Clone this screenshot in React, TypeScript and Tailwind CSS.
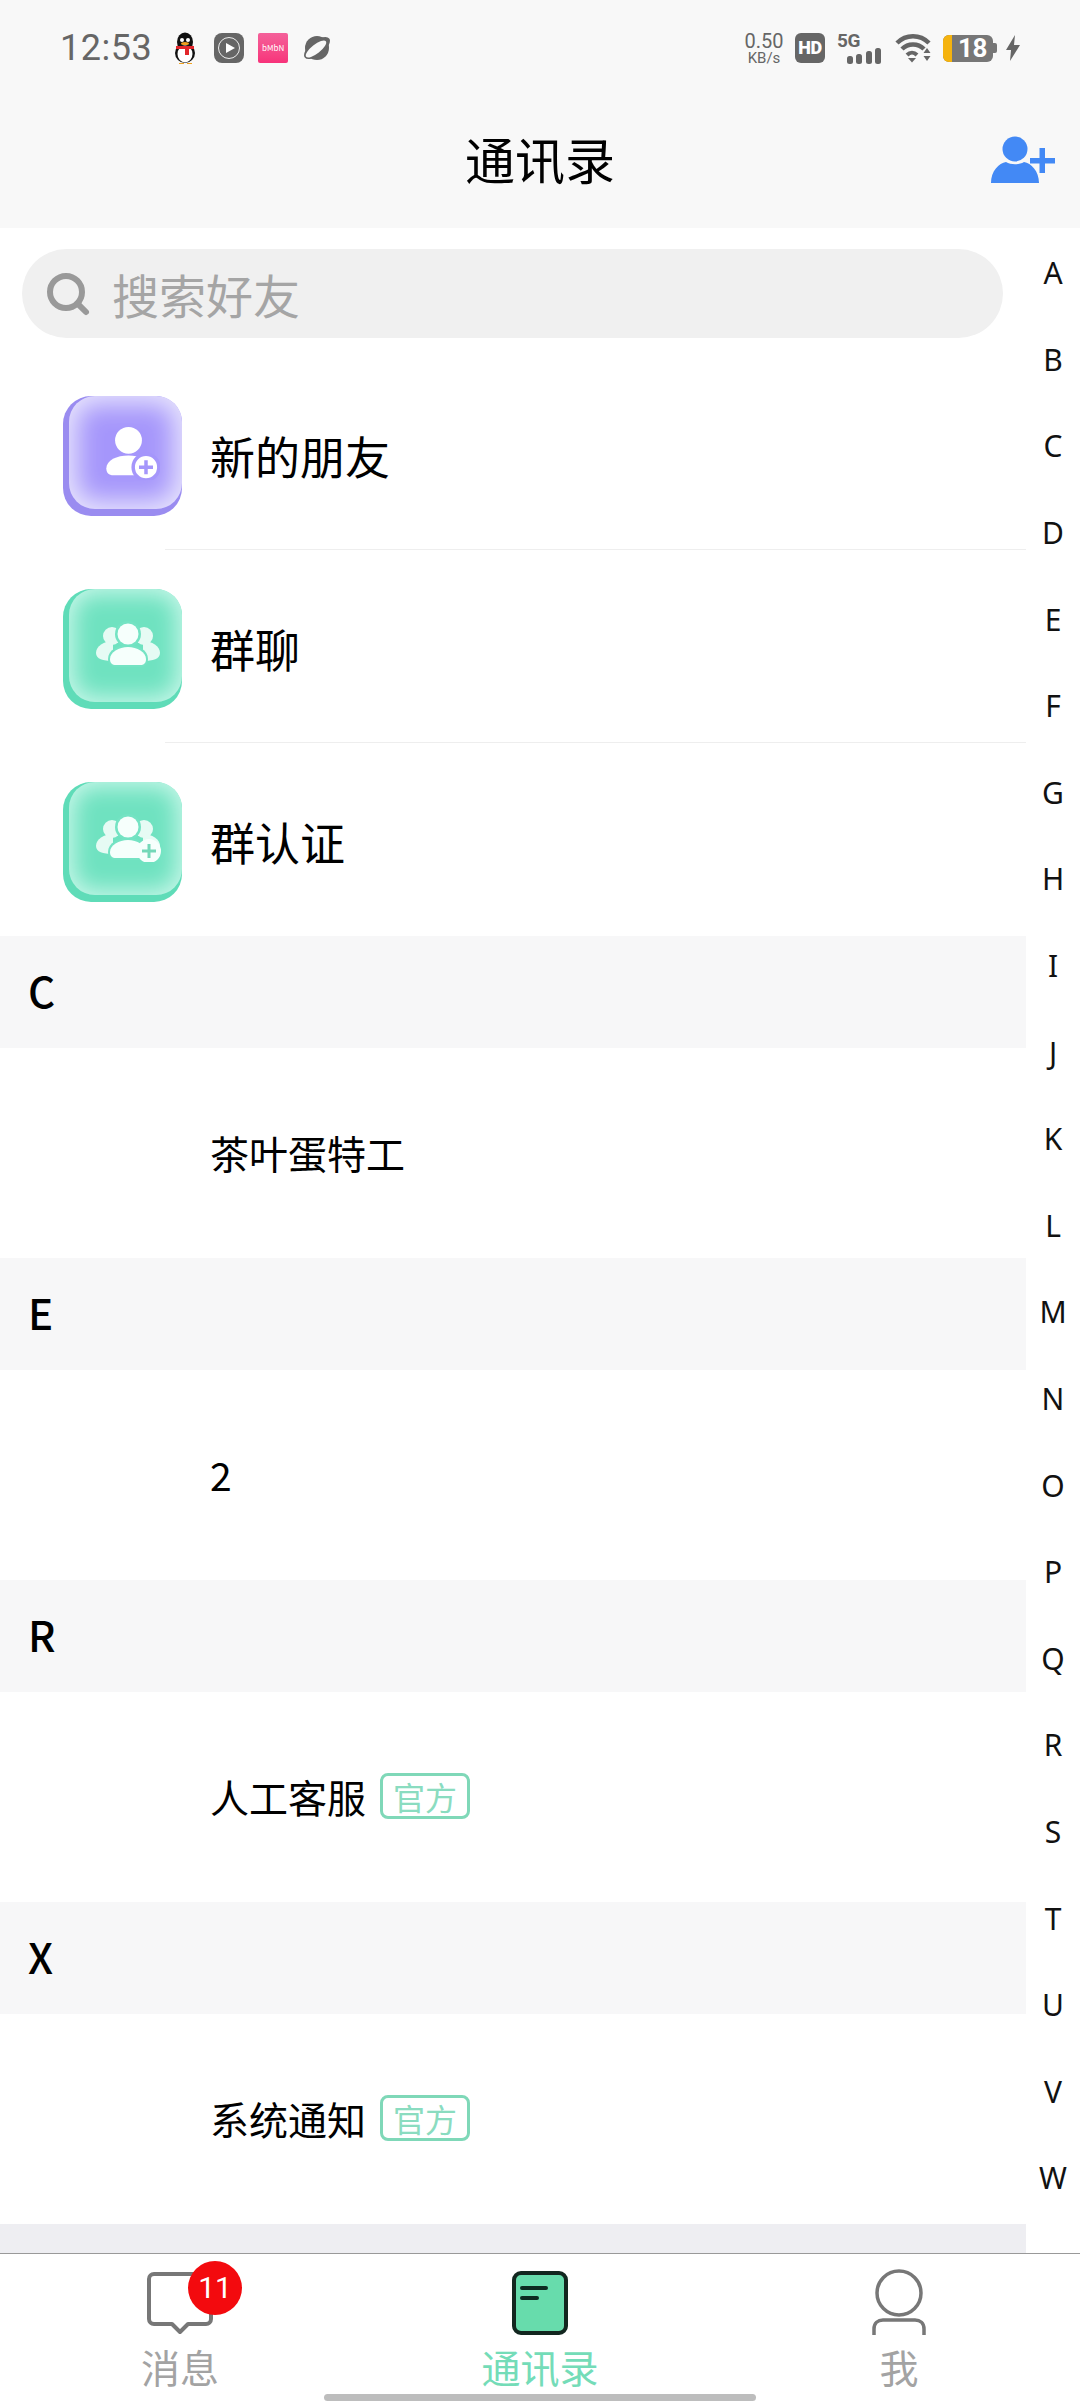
import { Search } from 'lucide-react';

const LETTERS = 'ABCDEFGHIJKLMNOPQRSTUVW'.split('');
const FONT = "font-['Noto_Sans_CJK_SC','Noto_Sans',sans-serif]";

const sections = [
	{ letter: 'C', name: '茶叶蛋特工', official: false },
	{ letter: 'E', name: '2', official: false },
	{ letter: 'R', name: '人工客服', official: true },
	{ letter: 'X', name: '系统通知', official: true },
];

function UserPlusGlyph({ color }: { color: string }) {
	return (
		<svg viewBox="6 0 48 48" className="ml-[12px] h-[56px] w-[56px]">
			<circle cx="27" cy="14" r="11.5" fill="#fff" />
			<path d="M8 38c0-7 9-11 19-11s15 3 15 11c0 4-2 6-6 6H14c-4 0-6-2-6-6z" fill="#fff" />
			<circle cx="42" cy="37" r="11" fill="#fff" stroke={color} strokeWidth="3" />
			<path d="M42 31v12M36 37h12" stroke={color} strokeWidth="3" />
		</svg>
	);
}

function GroupGlyph({ plus }: { plus?: boolean }) {
	return (
		<svg viewBox="1 0 68 48" className="ml-[8px] h-[48px] w-[68px]">
			<circle cx="17" cy="15" r="9" fill="#e6fbf4" />
			<circle cx="49" cy="15" r="9" fill="#e6fbf4" />
			<path d="M1 32c0-7 8-12 17-12v20C8 40 1 38 1 32z" fill="#e6fbf4" />
			<path d="M65 32c0-7-8-12-17-12v20c10 0 17-2 17-8z" fill="#e6fbf4" />
			<circle cx="33" cy="13" r="13" fill="#74e3c3" />
			<circle cx="33" cy="13" r="10.5" fill="#f6fffc" />
			<path d="M13 38c0-9 10-14 20-14s20 5 20 14c0 5-3 8-8 8H21c-5 0-8-3-8-8z" fill="#74e3c3" />
			<path d="M15 38c0-7 9-12 18-12s18 5 18 12c0 4-2 6-6 6H21c-4 0-6-2-6-6z" fill="#f6fffc" />
			{plus && (
				<>
					<circle cx="54" cy="37" r="12" fill="#f6fffc" />
					<path d="M54 30v14M47 37h14" stroke="#74d8b8" strokeWidth="3" />
				</>
			)}
		</svg>
	);
}

function Tile({ kind }: { kind: 'friend' | 'group' | 'verify' }) {
	const purple = kind === 'friend';
	return (
		<div
			className={`flex h-[120px] w-[119px] shrink-0 rounded-[28px] ${purple ? 'bg-[#9a8cf0]' : 'bg-[#5fdcb8]'}`}
		>
			<div
				className={`mb-[7px] ml-[6px] flex flex-1 items-center justify-center rounded-[26px] ${
					purple
						? 'bg-[#a596fb] shadow-[inset_0_0_26px_8px_#e9e6fd]'
						: 'bg-[#6fe2c0] shadow-[inset_0_0_22px_5px_#c8f7e9]'
				}`}
			>
				{purple ? <UserPlusGlyph color="#a596fb" /> : <GroupGlyph plus={kind === 'verify'} />}
			</div>
		</div>
	);
}

function StatusBar() {
	return (
		<div className="flex h-[96px] items-center pl-[60px] pr-[60px]">
			<span className="font-['Roboto',sans-serif] text-[36px] leading-none tracking-[0.5px] text-[#666]">
				12:53
			</span>
			<div className="ml-[18px] flex items-center gap-[14px]">
				{/* qq */}
				<svg viewBox="0 0 30 32" className="h-[32px] w-[30px]">
					<ellipse cx="15" cy="10" rx="8" ry="9.5" fill="#111" />
					<ellipse cx="15" cy="21" rx="10" ry="10" fill="#111" />
					<ellipse cx="15" cy="22" rx="7.5" ry="8.5" fill="#fff" />
					<circle cx="12" cy="8" r="2" fill="#fff" />
					<circle cx="18" cy="8" r="2" fill="#fff" />
					<ellipse cx="15" cy="11.5" rx="4" ry="1.6" fill="#f0a11f" />
					<path d="M6 14h18v3h-5v6h-4v-6H6z" fill="#e2262b" />
					<path d="M9 31h5v1H9zM17 31h5v1h-5z" fill="#f0a11f" />
				</svg>
				{/* player */}
				<div className="flex h-[30px] w-[30px] items-center justify-center rounded-[8px] bg-[#666]">
					<svg viewBox="0 0 24 24" className="h-[24px] w-[24px]">
						<circle cx="12" cy="12" r="10.5" fill="none" stroke="#eee" strokeWidth="1" />
						<path d="M9 7l9 5-9 5z" fill="#fff" />
					</svg>
				</div>
				{/* pink app */}
				<div className="flex h-[30px] w-[30px] items-center justify-center rounded-[2px] bg-gradient-to-b from-[#f4609a] to-[#f7327a] text-[8px] leading-none text-white">
					bMbN
				</div>
				{/* planet */}
				<svg viewBox="0 0 30 28" className="h-[28px] w-[30px]">
					<circle cx="15" cy="14" r="12" fill="#666" />
					<ellipse cx="15" cy="14" rx="15.500" ry="7" transform="rotate(-38 15 14)" fill="#666" />
					<ellipse cx="14" cy="15" rx="12.500" ry="4.500" transform="rotate(-38 14 15)" fill="#f8f8f8" />
				</svg>
			</div>

			<div className="ml-auto flex items-center">
				<div className="flex w-[38px] flex-col items-center text-[#666]">
					<span className="font-['Roboto',sans-serif] text-[20px] leading-[20px]">0.50</span>
					<span className="font-['Roboto',sans-serif] text-[15px] leading-[15px]">KB/s</span>
				</div>
				<div className="ml-[12px] flex h-[30px] w-[30px] items-center justify-center rounded-[6px] bg-[#666] font-['Roboto',sans-serif] text-[18px] font-black leading-none tracking-[-0.5px] text-white">
					HD
				</div>
				{/* 5G + bars */}
				<div className="relative ml-[12px] h-[32px] w-[44px]">
					<span className="absolute left-0 top-[-1px] font-['Roboto',sans-serif] text-[19px] font-bold leading-none tracking-[-0.5px] text-[#666]">
						5G
					</span>
					<svg viewBox="0 0 34 16" className="absolute bottom-0 right-0 h-[16px] w-[34px]">
						<rect x="0" y="8" width="6" height="8" rx="2.500" fill="#666" />
						<rect x="9" y="6" width="6" height="10" rx="2.500" fill="#666" />
						<rect x="19" y="3" width="6" height="13" rx="2.500" fill="#666" />
						<rect x="28" y="0" width="6" height="16" rx="2.500" fill="#666" />
					</svg>
				</div>
				{/* wifi */}
				<svg viewBox="0 0 36 30" className="ml-[14px] h-[30px] w-[36px]">
					<path d="M2 10C11 1 25 1 34 10" fill="none" stroke="#666" strokeWidth="4.500" />
					<path d="M7 16C13 10 23 10 29 16" fill="none" stroke="#666" strokeWidth="4.500" />
					<path d="M12 22C15 19 19 19 22 22" fill="none" stroke="#666" strokeWidth="4" />
					<path d="M13 25h8l-4 4.500z" fill="#666" />
					<path d="M32 15l3.500 5h-7zM28.500 23h7L32 28z" fill="#666" />
				</svg>
				{/* battery */}
				<div className="ml-[12px] flex items-center">
					<div className="flex h-[27px] w-[50px] items-center rounded-[6px] bg-[#777]">
						<div className="h-full w-[9px] rounded-l-[6px] bg-[#f5b30e]" />
						<span className="flex-1 text-center font-['Roboto',sans-serif] text-[26px] font-bold leading-none tracking-[-0.5px] text-white">
							18
						</span>
					</div>
					<div className="h-[10px] w-[4px] rounded-r-[2px] bg-[#777]" />
				</div>
				{/* charging */}
				<svg viewBox="0 0 14 26" className="ml-[9px] h-[26px] w-[14px]">
					<path d="M9 0L0 15h5l-1 11 10-16H8z" fill="#666" />
				</svg>
			</div>
		</div>
	);
}

function TabBar() {
	return (
		<div className="relative grid h-[151px] shrink-0 grid-cols-3 border-t border-[#999] bg-white">
			<div className="flex flex-col items-center pt-[17px]">
				<div className="relative h-[64px] w-[68px]">
					<svg viewBox="0 0 68 64" className="h-[64px] w-[68px]">
						<path
							d="M8 3h52a5 5 0 015 5v40a5 5 0 01-5 5H42l-8 8-8-8H8a5 5 0 01-5-5V8a5 5 0 015-5z"
							fill="#fff"
							stroke="#777"
							strokeWidth="4"
							strokeLinejoin="round"
						/>
					</svg>
					<div className="absolute left-[42px] top-[-10px] flex h-[54px] w-[54px] items-center justify-center rounded-full bg-[#f30a0e] font-['Roboto',sans-serif] text-[30px] leading-none text-white">
						11
					</div>
				</div>
				<span className={`mt-[9px] ${FONT} text-[39px] leading-[44px] text-[#a3a3a3]`}>消息</span>
			</div>
			<div className="flex flex-col items-center pt-[17px]">
				<svg viewBox="0 0 56 64" className="h-[64px] w-[56px]">
					<rect x="2" y="2" width="52" height="60" rx="7" fill="#67dcac" stroke="#12261f" strokeWidth="4" />
					<path d="M10 17h24M10 27h15" stroke="#0d2a20" strokeWidth="4" strokeLinecap="round" />
				</svg>
				<span className={`mt-[9px] ${FONT} text-[39px] leading-[44px] text-[#74dcb8]`}>通讯录</span>
			</div>
			<div className="flex flex-col items-center pt-[15px] pr-[2px]">
				<svg viewBox="0 0 54 66" className="h-[66px] w-[54px]">
					<circle cx="27" cy="24" r="22" fill="none" stroke="#777" strokeWidth="3.500" />
					<path d="M2 66V60c0-6 4-9 9-9h32c5 0 9 3 9 9v6" fill="none" stroke="#777" strokeWidth="3.500" />
				</svg>
				<span className={`mt-[9px] ${FONT} text-[39px] leading-[44px] text-[#a3a3a3]`}>我</span>
			</div>
			<div className="absolute bottom-[3px] left-[324px] h-[7px] w-[432px] rounded-full bg-[#bdbdbd]" />
		</div>
	);
}

export default function App() {
	return (
		<div className={`flex h-[2404px] w-[1080px] flex-col overflow-hidden bg-white ${FONT}`}>
			{/* Header */}
			<div className="h-[228px] shrink-0 bg-[#f8f8f8]">
				<StatusBar />
				<div className="grid h-[132px] grid-cols-[1fr_auto_1fr] items-center pb-[8px]">
					<div />
					<h1 className="text-[50px] font-normal leading-none text-black">通讯录</h1>
					<svg viewBox="0 0 64 50" className="ml-auto mr-[24px] mt-[3px] h-[50px] w-[66px]">
						<circle cx="24" cy="14" r="12.500" fill="#4389f5" />
						<path d="M0 48c0-12 8-20 15-21 5 3 13 3 18 0 7 1 15 9 15 21z" fill="#4389f5" />
						<path d="M39 23h25v5.500H39zM48.500 13H54v25h-5.500z" fill="#4389f5" />
					</svg>
				</div>
			</div>

			<div className="flex min-h-0 flex-1">
				{/* List */}
				<div className="w-[1026px] shrink-0">
					<div className="pb-[19px] pl-[22px] pt-[21px]">
						<div className="flex h-[89px] w-[981px] items-center rounded-full bg-[#f0f0f0] pl-[22px]">
							<Search className="h-[48px] w-[48px] text-[#999]" strokeWidth={3} />
							<span className="ml-[20px] text-[47px] leading-none text-[#a5a5a5]">搜索好友</span>
						</div>
					</div>

					{(
						[
							['friend', '新的朋友'],
							['group', '群聊'],
							['verify', '群认证'],
						] as const
					).map(([kind, label], i) => (
						<div key={kind}>
							<div className="flex h-[192px] items-center pl-[63px] pt-[5px]">
								<Tile kind={kind} />
								<span className="ml-[28px] text-[45px] leading-none text-black">{label}</span>
							</div>
							{i < 2 && <div className="ml-[165px] h-px bg-[#eeeeee]" />}
						</div>
					))}

					<div className="h-px" />

					{sections.map((s) => (
						<div key={s.letter}>
							<div className="flex h-[112px] items-center bg-[#f7f7f8] pb-[4px] pl-[28px] text-[42px] font-medium leading-none text-black">
								{s.letter}
							</div>
							<div className="flex h-[210px] items-center pb-[2px] pl-[210px]">
								<span className="text-[39px] leading-none text-black">{s.name}</span>
								{s.official && (
									<span className="ml-[14px] flex h-[46px] w-[90px] items-center justify-center rounded-[8px] border-[3px] border-[#7fd8b8] text-[32px] leading-none text-[#8adcc0]">
										官方
									</span>
								)}
							</div>
						</div>
					))}
					<div className="h-[40px] bg-[#eeeef2]" />
				</div>

				{/* Index */}
				<div className="flex-1 pt-[2px]">
					{LETTERS.map((l) => (
						<div
							key={l}
							className="flex h-[86.6px] items-center justify-center font-['Noto_Sans',sans-serif] text-[30px] leading-none text-[#111]"
						>
							{l}
						</div>
					))}
				</div>
			</div>

			<TabBar />
		</div>
	);
}
